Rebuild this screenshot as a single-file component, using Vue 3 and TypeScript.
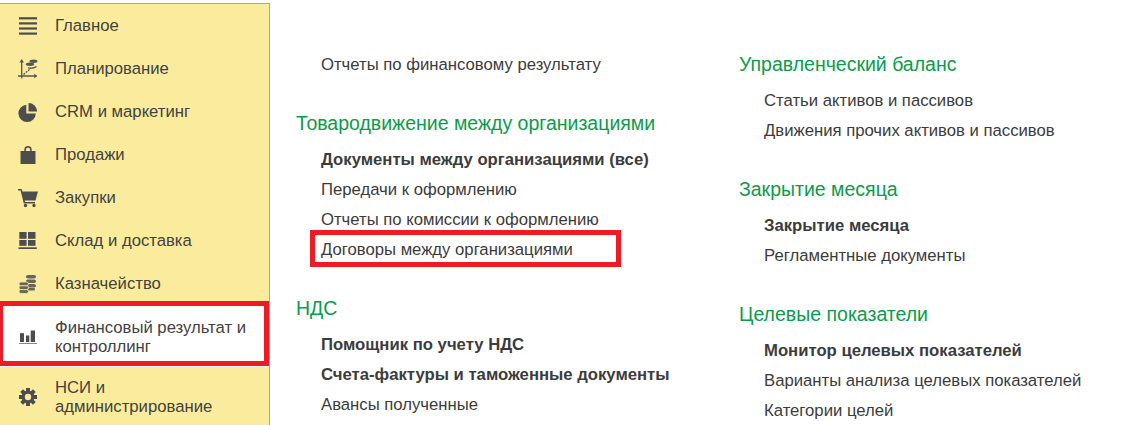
<script setup lang="ts">
const menu = [
  { icon: 'lines', label: 'Главное' },
  { icon: 'plan', label: 'Планирование' },
  { icon: 'pie', label: 'CRM и маркетинг' },
  { icon: 'bag', label: 'Продажи' },
  { icon: 'cart', label: 'Закупки' },
  { icon: 'grid', label: 'Склад и доставка' },
  { icon: 'coins', label: 'Казначейство' },
]
const col1 = [
  { links: [{ t: 'Отчеты по финансовому результату' }] },
  {
    title: 'Товародвижение между организациями',
    links: [
      { t: 'Документы между организациями (все)', b: true },
      { t: 'Передачи к оформлению' },
      { t: 'Отчеты по комиссии к оформлению' },
      { t: 'Договоры между организациями', mark: true },
    ],
  },
  {
    title: 'НДС',
    links: [
      { t: 'Помощник по учету НДС', b: true },
      { t: 'Счета-фактуры и таможенные документы', b: true },
      { t: 'Авансы полученные' },
    ],
  },
]
const col2 = [
  {
    title: 'Управленческий баланс',
    links: [{ t: 'Статьи активов и пассивов' }, { t: 'Движения прочих активов и пассивов' }],
  },
  {
    title: 'Закрытие месяца',
    links: [{ t: 'Закрытие месяца', b: true }, { t: 'Регламентные документы' }],
  },
  {
    title: 'Целевые показатели',
    links: [
      { t: 'Монитор целевых показателей', b: true },
      { t: 'Варианты анализа целевых показателей' },
      { t: 'Категории целей' },
    ],
  },
]
const columns = [col1, col2]
</script>

<template>
  <div class="page">
    <aside class="side">
      <div v-for="m in menu" :key="m.label" class="item">
        <svg class="ico" viewBox="0 0 20 20" aria-hidden="true">
          <g v-if="m.icon === 'lines'" fill="#4d4d4d">
            <rect x="1" y="1.2" width="18" height="2.2" />
            <rect x="1" y="6.3" width="18" height="2.2" />
            <rect x="1" y="11.4" width="18" height="2.2" />
            <rect x="1" y="16.5" width="18" height="2.2" />
          </g>
          <g v-else-if="m.icon === 'plan'">
            <path d="M3.7 1.5V19.5M0 17H18" stroke="#555" stroke-width="1.3" fill="none" />
            <path d="M3.7 0l2.3 3.5H1.4zM19.500 17l-3.300-2.200v4.400z" fill="#555" />
            <path d="M5.5 15.5l6-5" stroke="#555" stroke-width="1.3" stroke-dasharray="2 1" fill="none" />
            <ellipse cx="15.5" cy="2.2" rx="4" ry="1.7" fill="#555" />
            <ellipse cx="12" cy="5.2" rx="4.2" ry="1.7" fill="#555" />
            <path d="M10 8.3c2.5.6 6 .3 8.500-1.500v1.500c-2.500 1.800-6 2-8.500 1.300z" fill="#555" />
          </g>
          <g v-else-if="m.icon === 'pie'" fill="#4d4d4d">
            <path d="M8.3 2.7v8.800h9.500A8.700 8.700 0 1 1 8.300 2.700z" />
            <path d="M10.5 1a8.700 8.700 0 0 1 8.700 8.500h-8.700z" />
          </g>
          <g v-else-if="m.icon === 'bag'" fill="#4d4d4d">
            <path d="M2.5 6H17.500V19H2.500z" />
            <path d="M6.3 8V5a3.700 4 0 0 1 7.400 0V8h-1.500V5a2.200 2.600 0 0 0-4.400 0V8z" />
          </g>
          <g v-else-if="m.icon === 'cart'" fill="#4d4d4d">
            <path d="M0 1H3.600L4.400 3.500H20L17.500 12.500H6.800L7.200 14H17V15.500H5.800L2.600 2.400H0z" />
            <circle cx="7.5" cy="17.5" r="1.7" />
            <circle cx="16" cy="17.5" r="1.7" />
          </g>
          <g v-else-if="m.icon === 'grid'" fill="#4d4d4d">
            <rect x="1.3" y="1" width="7.3" height="6.8" />
            <rect x="10" y="1" width="7.5" height="6.8" />
            <rect x="1.3" y="9" width="7.3" height="5.8" />
            <rect x="10" y="9" width="7.5" height="5.8" />
            <rect x="0.5" y="16.3" width="18.3" height="1.7" />
          </g>
          <g v-else-if="m.icon === 'coins'" fill="#666657">
            <rect x="8" y="1" width="10" height="3.6" rx="1.8" />
            <rect x="8" y="5.5" width="10" height="3.6" rx="1.8" />
            <rect x="9" y="10" width="9" height="3.6" rx="1.8" />
            <rect x="10" y="14" width="7" height="2.5" rx="1.2" />
            <g stroke="#fbec9d" stroke-width="0.8">
              <rect x="1" y="8" width="9.5" height="3.8" rx="1.9" />
              <rect x="1" y="11.8" width="9.5" height="3.8" rx="1.9" />
              <rect x="1" y="15.6" width="9.5" height="3.8" rx="1.9" />
            </g>
          </g>
        </svg>
        <span class="label">{{ m.label }}</span>
      </div>

      <div class="item active">
        <svg class="ico" viewBox="0 0 20 20" aria-hidden="true">
          <g fill="#4d4d4d">
            <rect x="2" y="6.2" width="4" height="8.8" />
            <rect x="8" y="8.5" width="3.3" height="6.5" />
            <rect x="12.7" y="3.5" width="4.3" height="11.5" />
          </g>
          <rect x="1" y="16" width="18" height="1" fill="#888" />
        </svg>
        <span class="label">Финансовый результат и контроллинг</span>
      </div>

      <div class="item last">
        <svg class="ico" viewBox="0 0 20 20" aria-hidden="true">
          <g fill="#4d4d4d">
            <rect x="8" y="1" width="4" height="18" />
            <rect x="8" y="1" width="4" height="18" transform="rotate(45 10 10)" />
            <rect x="8" y="1" width="4" height="18" transform="rotate(90 10 10)" />
            <rect x="8" y="1" width="4" height="18" transform="rotate(135 10 10)" />
            <circle cx="10" cy="10" r="6.4" />
          </g>
          <circle cx="10" cy="10" r="3.2" fill="#fbec9d" />
        </svg>
        <span class="label">НСИ и администрирование</span>
      </div>
    </aside>

    <main class="content">
      <section v-for="(col, i) in columns" :key="i" class="col" :class="i === 0 ? 'col-a' : 'col-b'">
        <div v-for="(g, j) in col" :key="j" class="group">
          <h2 v-if="g.title" class="title">{{ g.title }}</h2>
          <ul class="links">
            <li v-for="l in g.links" :key="l.t" class="link" :class="{ bold: l.b }">
              <span class="text" :class="{ mark: l.mark }">{{ l.t }}</span>
            </li>
          </ul>
        </div>
      </section>
    </main>
  </div>
</template>

<style scoped>
.page {
  display: flex;
  width: 1133px;
  height: 425px;
  overflow: hidden;
  background: #fff;
  font-family: "Liberation Sans", Arial, sans-serif;
  color: #3c3c3c;
}
.side {
  box-sizing: border-box;
  flex: none;
  width: 270px;
  height: 422px;
  margin-top: 3px;
  overflow: hidden;
  background: #fbec9d;
  border-top: 1px solid #a9a69a;
  border-right: 1px solid #a9a69a;
}
.item {
  display: flex;
  align-items: center;
  height: 43px;
  padding-left: 18px;
  font-size: 16.7px;
  color: #424242;
}
.ico {
  flex: none;
  width: 20px;
  height: 20px;
  margin-right: 17px;
  overflow: visible;
}
.label {
  line-height: 19px;
}
.active {
  box-sizing: border-box;
  height: 65px;
  margin-top: -4px;
  padding-left: 15px;
  padding-top: 6px;
  background: #fff;
  border: 5px solid #ed1c24;
  border-left-width: 3px;
  box-shadow: 0 1px 0 #fff;
}
.last {
  height: 60px;
  margin-top: 1px;
}
.last .label {
  max-width: 200px;
}
.content {
  display: flex;
  flex: 1;
  padding-top: 50px;
}
.col-a {
  box-sizing: border-box;
  width: 469px;
  padding-left: 26px;
}
.title {
  margin: 0 0 8px;
  font-size: 19.5px;
  font-weight: 400;
  line-height: 28px;
  color: #0a9c4a;
}
.group + .group {
  margin-top: 29px;
}
.links {
  margin: 0;
  padding: 0 0 0 25px;
  list-style: none;
}
.link {
  height: 30px;
  font-size: 16.7px;
  line-height: 30px;
  white-space: nowrap;
  color: #3c3c3c;
}
.bold {
  font-weight: 700;
}
.text {
  position: relative;
  display: inline-block;
}
.mark::after {
  content: "";
  position: absolute;
  left: -11px;
  top: -5px;
  width: 311px;
  height: 37px;
  box-sizing: border-box;
  border: 5px solid #ed1c24;
}
</style>
